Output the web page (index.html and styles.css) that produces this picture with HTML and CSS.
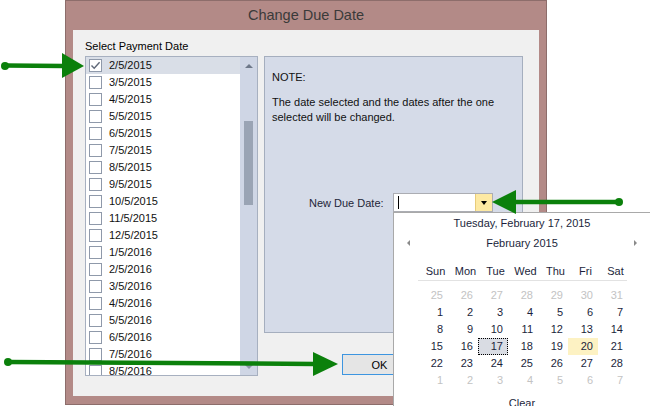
FILE: index.html
```html
<!DOCTYPE html>
<html>
<head>
<meta charset="utf-8">
<title>Change Due Date</title>
<link rel="stylesheet" href="styles.css">
</head>
<body>
<div class="window">
  <div class="titlebar">Change Due Date</div>
  <div class="client">
    <div class="leftcol">
      <div class="label">Select Payment Date</div>
      <div class="listbox">
        <div class="items">
          <div class="item selected"><span class="cb"><svg width="11" height="11" viewBox="0 0 11 11"><path d="M1.5 5.5 L4.2 8.3 L9.6 2.2" fill="none" stroke="#5f6878" stroke-width="1.4"/></svg></span>2/5/2015</div>
          <div class="item"><span class="cb"></span>3/5/2015</div>
          <div class="item"><span class="cb"></span>4/5/2015</div>
          <div class="item"><span class="cb"></span>5/5/2015</div>
          <div class="item"><span class="cb"></span>6/5/2015</div>
          <div class="item"><span class="cb"></span>7/5/2015</div>
          <div class="item"><span class="cb"></span>8/5/2015</div>
          <div class="item"><span class="cb"></span>9/5/2015</div>
          <div class="item"><span class="cb"></span>10/5/2015</div>
          <div class="item"><span class="cb"></span>11/5/2015</div>
          <div class="item"><span class="cb"></span>12/5/2015</div>
          <div class="item"><span class="cb"></span>1/5/2016</div>
          <div class="item"><span class="cb"></span>2/5/2016</div>
          <div class="item"><span class="cb"></span>3/5/2016</div>
          <div class="item"><span class="cb"></span>4/5/2016</div>
          <div class="item"><span class="cb"></span>5/5/2016</div>
          <div class="item"><span class="cb"></span>6/5/2016</div>
          <div class="item"><span class="cb"></span>7/5/2016</div>
          <div class="item"><span class="cb"></span>8/5/2016</div>
        </div>
        <div class="vscroll">
          <div class="sbtn"><span class="tri-up"></span></div>
          <div class="thumb"></div>
          <div class="sfill"></div>
          <div class="sbtn"><span class="tri-down"></span></div>
        </div>
      </div>
    </div>
    <div class="rightcol">
      <div class="panel">
        <div class="note">NOTE:</div>
        <p class="notetext">The date selected and the dates after the one selected will be changed.</p>
        <div class="duerow">
          <span class="duelabel">New Due Date:</span>
          <div class="picker">
            <div class="pickinput"><span class="caret"></span></div>
            <div class="dropbtn"><span class="tri-drop"></span></div>
            <div class="calendar">
              <div class="cal-title">Tuesday, February 17, 2015</div>
              <div class="cal-month">
                <span class="tri-left"></span>
                <span class="month-name">February 2015</span>
                <span class="tri-right"></span>
              </div>
              <div class="cal-days">
                <span>Sun</span><span>Mon</span><span>Tue</span><span>Wed</span><span>Thu</span><span>Fri</span><span>Sat</span>
              </div>
              <div class="cal-grid">
                <span class="other">25</span><span class="other">26</span><span class="other">27</span><span class="other">28</span><span class="other">29</span><span class="other">30</span><span class="other">31</span>
                <span>1</span><span>2</span><span>3</span><span>4</span><span>5</span><span>6</span><span>7</span>
                <span>8</span><span>9</span><span>10</span><span>11</span><span>12</span><span>13</span><span>14</span>
                <span>15</span><span>16</span><span class="today">17</span><span>18</span><span>19</span><span class="hot">20</span><span>21</span>
                <span>22</span><span>23</span><span>24</span><span>25</span><span>26</span><span>27</span><span>28</span>
                <span class="other">1</span><span class="other">2</span><span class="other">3</span><span class="other">4</span><span class="other">5</span><span class="other">6</span><span class="other">7</span>
              </div>
              <div class="cal-clear">Clear</div>
            </div>
          </div>
        </div>
      </div>
      <div class="buttons">
        <button class="btn focused">OK</button>
      </div>
    </div>
  </div>
</div>
<svg class="arrows" width="650" height="406" viewBox="0 0 650 406">
  <g fill="#0b800b" stroke="#0b800b">
    <circle cx="5" cy="66" r="4" stroke="none"/>
    <line x1="5" y1="65.5" x2="64" y2="66" stroke-width="4.5"/>
    <polygon points="62,53 84,66 62,78" stroke="none"/>

    <circle cx="619" cy="202" r="4" stroke="none"/>
    <line x1="619" y1="202" x2="514" y2="202" stroke-width="4.5"/>
    <polygon points="516,190 492,202 516,214" stroke="none"/>

    <circle cx="8" cy="362" r="4" stroke="none"/>
    <line x1="8" y1="362" x2="315" y2="364" stroke-width="4.5"/>
    <polygon points="313,352 338,364 313,376" stroke="none"/>
  </g>
</svg>
</body>
</html>
```

FILE: styles.css
```css
* {
  box-sizing: border-box;
}

html, body {
  margin: 0;
  padding: 0;
}

body {
  width: 650px;
  height: 406px;
  overflow: hidden;
  background: #ffffff;
  font-family: "Liberation Sans", Arial, sans-serif;
  font-size: 11px;
  color: #000;
  position: relative;
}

.window {
  margin-left: 65px;
  width: 482px;
  height: 405px;
  background: #b38a87;
  border: 1px solid #8d6d6b;
  padding: 0 7px 8px 7px;
  display: flex;
  flex-direction: column;
}

.titlebar {
  height: 29px;
  line-height: 29px;
  text-align: center;
  font-size: 14.5px;
  color: #3a3a3a;
}

.client {
  width: 466px;
  height: 366px;
  background: #f0f0f0;
  padding: 10px 12px 0 12px;
  display: flex;
  gap: 6px;
}

.leftcol {
  width: 173px;
  display: flex;
  flex-direction: column;
}

.label {
  height: 13px;
  line-height: 13px;
  margin-bottom: 3px;
  font-size: 11px;
}

.listbox {
  height: 320px;
  border: 1px solid #a7b0c0;
  background: #fff;
  display: flex;
  overflow: hidden;
}

.items {
  flex: 1;
  overflow: hidden;
}

.item {
  height: 17px;
  line-height: 17px;
  display: flex;
  align-items: center;
  padding-left: 3px;
  color: #111;
  white-space: nowrap;
}

.item.selected {
  background: #d9dee7;
}

.cb {
  width: 13px;
  height: 13px;
  border: 1px solid #8f99aa;
  background: #fff;
  margin-right: 7px;
  flex: none;
  display: flex;
  align-items: center;
  justify-content: center;
}

.vscroll {
  width: 17px;
  background: #cfd6e5;
  display: flex;
  flex-direction: column;
}

.sbtn {
  height: 17px;
  display: flex;
  align-items: center;
  justify-content: center;
}

.tri-up {
  width: 0;
  height: 0;
  border-left: 4px solid transparent;
  border-right: 4px solid transparent;
  border-bottom: 4px solid #6e7889;
}

.tri-down {
  width: 0;
  height: 0;
  border-left: 4px solid transparent;
  border-right: 4px solid transparent;
  border-top: 4px solid #8d97a8;
}

.thumb {
  margin: 47px 4px 0 4px;
  height: 84px;
  background: #9aa4b4;
}

.sfill {
  flex: 1;
}

.rightcol {
  width: 259px;
  margin-top: 16px;
  display: flex;
  flex-direction: column;
}

.panel {
  height: 277px;
  border: 1px solid #a5aebe;
  background: #d5dbe8;
  padding: 13px 7px 0 7px;
}

.note {
  line-height: 15px;
  color: #111;
}

.notetext {
  margin: 10px 0 0 0;
  width: 236px;
  line-height: 15px;
  color: #111;
}

.duerow {
  margin-top: 68px;
  padding-left: 37px;
  height: 19px;
  display: flex;
  align-items: center;
}

.duelabel {
  width: 84px;
  color: #1e2638;
}

.picker {
  position: relative;
  width: 100px;
  height: 19px;
  border: 1px solid #abadb3;
  background: #fff;
  display: flex;
}

.pickinput {
  flex: 1;
  display: flex;
  align-items: center;
  padding-left: 4px;
}

.caret {
  width: 1px;
  height: 13px;
  background: #000;
}

.dropbtn {
  width: 17px;
  background: #fde9a3;
  border-left: 1px solid #e8cc7a;
  display: flex;
  align-items: center;
  justify-content: center;
}

.tri-drop {
  width: 0;
  height: 0;
  border-left: 3px solid transparent;
  border-right: 3px solid transparent;
  border-top: 4px solid #000;
}

.calendar {
  position: absolute;
  left: -1px;
  top: 18px;
  width: 258px;
  height: 200px;
  background: #fff;
  border: 1px solid #a9a9a9;
  z-index: 5;
  color: #1c1f3c;
}

.cal-title {
  height: 20px;
  line-height: 20px;
  text-align: center;
  font-size: 11px;
}

.cal-month {
  height: 20px;
  display: flex;
  align-items: center;
  padding: 0 13px;
}

.month-name {
  flex: 1;
  text-align: center;
  font-size: 11px;
}

.tri-left {
  width: 0;
  height: 0;
  border-top: 3px solid transparent;
  border-bottom: 3px solid transparent;
  border-right: 3px solid #8a8a8a;
}

.tri-right {
  width: 0;
  height: 0;
  border-top: 3px solid transparent;
  border-bottom: 3px solid transparent;
  border-left: 3px solid #8a8a8a;
}

.cal-days {
  margin: 9px 23px 0 24px;
  height: 19px;
  border-bottom: 1px solid #e2e2e2;
  display: grid;
  grid-template-columns: repeat(7, 30px);
}

.cal-days span {
  line-height: 18px;
  text-align: center;
  padding-left: 5px;
  font-size: 11px;
}

.cal-grid {
  margin: 6px 0 0 24px;
  display: grid;
  grid-template-columns: repeat(7, 30px);
  grid-auto-rows: 17px;
}

.cal-grid span {
  line-height: 17px;
  text-align: right;
  padding-right: 5px;
  font-size: 11px;
}

.cal-grid .other {
  color: #c3c3c3;
}

.cal-grid .today {
  background: #d9dce3;
  outline: 1px dotted #000;
  outline-offset: -1px;
}

.cal-grid .hot {
  background: #fdf2c3;
}

.cal-clear {
  margin-top: 6px;
  line-height: 16px;
  text-align: center;
  font-size: 11px;
}

.buttons {
  margin-top: 21px;
  padding-left: 78px;
  display: flex;
  gap: 6px;
}

.btn {
  width: 75px;
  height: 21px;
  border: 1px solid #adadad;
  background: #e1e1e1;
  font-family: "Liberation Sans", Arial, sans-serif;
  font-size: 11px;
  color: #000;
  padding: 0;
}

.btn.focused {
  border-color: #3d95e0;
  background: #e5e5e5;
}

.arrows {
  position: absolute;
  left: 0;
  top: 0;
  z-index: 10;
  pointer-events: none;
}
```
